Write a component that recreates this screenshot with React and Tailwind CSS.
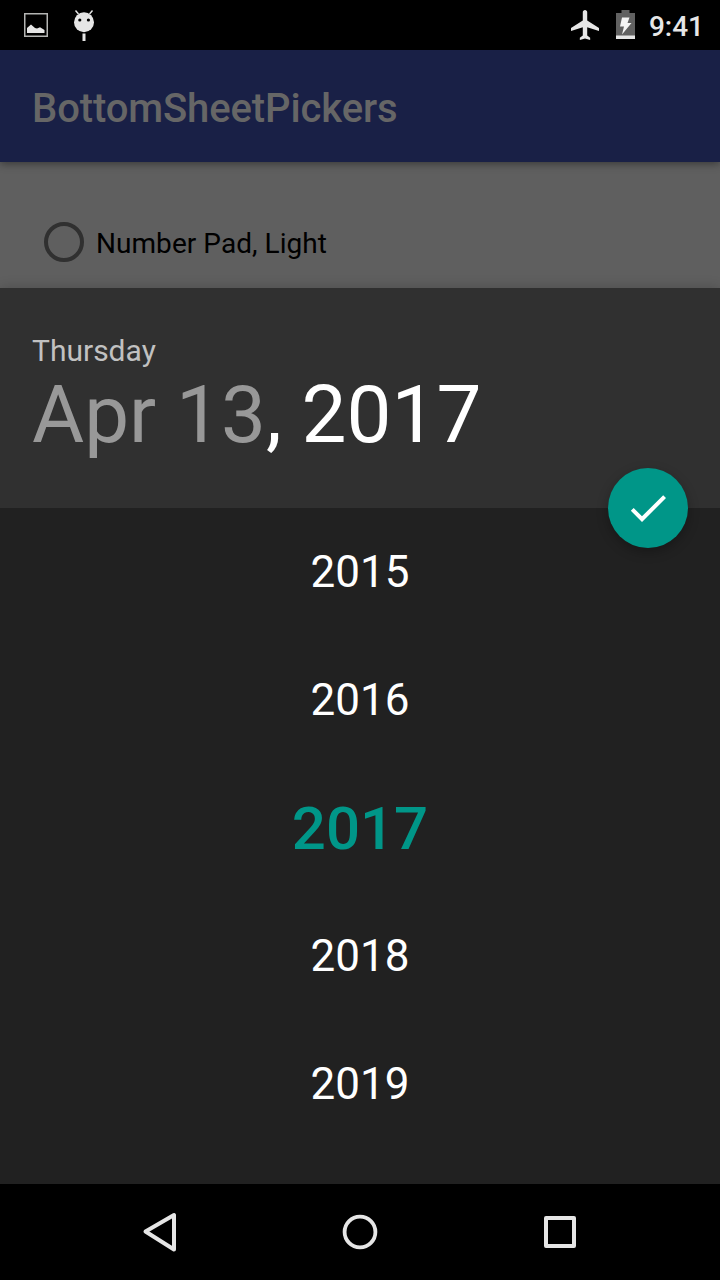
import React from "react";

const YEARS = [2015, 2016, 2017, 2018, 2019];
const SELECTED = 2017;

function PictureIcon() {
  return (
    <svg width="24" height="24" viewBox="0 0 24 24" className="block">
      <rect x="0.75" y="0.75" width="22.5" height="22.5" fill="none" stroke="#b4b5b3" strokeWidth="1.5" />
      <path d="M3 20V15L7 11.5L11 15L13 15.5L16 14.3L20.5 17V20Z" fill="#e6e6e6" />
    </svg>
  );
}

function DebugIcon() {
  return (
    <svg width="20" height="32" viewBox="0 0 20 32" className="block">
      <path d="M1.500 1.500L4.500 5M18.500 1.500L15.500 5" stroke="#e6e6e6" strokeWidth="1.4" />
      <circle cx="10" cy="13.200" r="10" fill="#e6e6e6" />
      <circle cx="5.8" cy="11" r="1.6" fill="#000" />
      <circle cx="14.4" cy="11" r="1.6" fill="#000" />
      <path d="M10 24.500V32" stroke="#e6e6e6" strokeWidth="3" />
    </svg>
  );
}

function AirplaneIcon() {
  return (
    <svg width="28" height="30" viewBox="2 2 19 20" preserveAspectRatio="none" className="block">
      <path d="M21 16v-2l-8-5V3.5c0-.83-.67-1.5-1.5-1.5S10 2.67 10 3.500V9l-8 5v2l8-2.500V19l-2 1.500V22l3.500-1 3.500 1v-1.500L13 19v-5.500l8 2.500z" fill="#e6e6e6" />
    </svg>
  );
}

function BatteryIcon() {
  return (
    <svg width="19" height="29" viewBox="0 0 19 29" className="block">
      <path d="M0 3H5.500V0H13.500V3H19V26H0Z" fill="#616161" />
      <rect y="25.500" width="19" height="3.500" fill="#e6e6e6" />
      <path d="M6 7.500H13.500L11.500 13H15.500L6 24.500L8 16.500H4Z" fill="#f5f5f5" />
    </svg>
  );
}

function StatusBar() {
  return (
    <header className="flex h-[50px] shrink-0 items-center justify-between bg-black pl-6 pr-4 text-[#e6e6e6]">
      <div className="flex items-center gap-[26px]">
        <PictureIcon />
        <DebugIcon />
      </div>
      <div className="flex items-center">
        <AirplaneIcon />
        <div className="-mt-px ml-[17px]">
          <BatteryIcon />
        </div>
        <span className="ml-[14px] mt-[4px] text-[28px] font-medium leading-8">9:41</span>
      </div>
    </header>
  );
}

function NavigationBar() {
  return (
    <nav className="flex h-24 shrink-0 items-center justify-center gap-[160px] bg-black">
      <svg width="40" height="40" viewBox="0 0 40 40" fill="none" stroke="#e6e6e6" strokeWidth="4" strokeLinejoin="round">
        <path d="M5.500 20L34 3.500V38Z" transform="translate(0 -0.500)" />
      </svg>
      <svg width="40" height="40" viewBox="0 0 40 40" fill="none" stroke="#e6e6e6" strokeWidth="3.800">
        <circle cx="20" cy="20" r="15.400" />
      </svg>
      <svg width="40" height="40" viewBox="0 0 40 40" fill="none" stroke="#e6e6e6" strokeWidth="4" strokeLinejoin="round">
        <rect x="6" y="6" width="28" height="28" />
      </svg>
    </nav>
  );
}

function DateHeader() {
  return (
    <div className="relative h-[220px] shrink-0 bg-[#303030] px-8 pt-[45px]">
      <div className="text-[30px] leading-[36px] text-[#c1c1c1]">Thursday</div>
      <div className="-mt-px whitespace-pre text-[80px] leading-[94px] text-white">
        <span className="text-[#989898]">Apr 13</span>, 2017
      </div>
      <button
        aria-label="Done"
        className="absolute right-8 -bottom-10 flex size-20 items-center justify-center rounded-full bg-[#009688] shadow-[0_4px_12px_rgba(0,0,0,0.28)]"
      >
        <svg width="48" height="48" viewBox="0 0 24 24" fill="#fff">
          <path d="M9 16.170L4.830 12l-1.420 1.410L9 19 21 7l-1.410-1.410z" />
        </svg>
      </button>
    </div>
  );
}

export default function App() {
  return (
    <div className="flex h-[1280px] w-[720px] flex-col overflow-hidden bg-[#5f5f5f] font-['Roboto',sans-serif]">
      <StatusBar />
      <div className="z-10 flex h-28 shrink-0 items-center bg-[#192046] px-8 pt-[5px] shadow-[0_2px_8px_rgba(0,0,0,0.4)]">
        <h1 className="text-[40px] font-medium leading-[48px] tracking-[-0.11px] text-[#666666]">BottomSheetPickers</h1>
      </div>
      <div className="flex h-[126px] shrink-0 items-center pl-11 pt-[34px]">
        <div className="size-10 rounded-full border-4 border-[#303030]" />
        <span className="ml-3 mt-[4px] text-[28px] leading-8 tracking-[0.05px] text-black">Number Pad, Light</span>
      </div>
      <main className="flex flex-1 flex-col bg-[#212121] shadow-[0_0_12px_rgba(0,0,0,0.2)]">
        <DateHeader />
        <ul className="flex flex-col">
          {YEARS.map((year) => (
            <li
              key={year}
              className={
                year === SELECTED
                  ? "flex h-32 items-center justify-center pt-px text-[60px] font-medium text-[#009688]"
                  : "flex h-32 items-center justify-center text-[44px] text-white"
              }
            >
              {year}
            </li>
          ))}
        </ul>
      </main>
      <NavigationBar />
    </div>
  );
}
